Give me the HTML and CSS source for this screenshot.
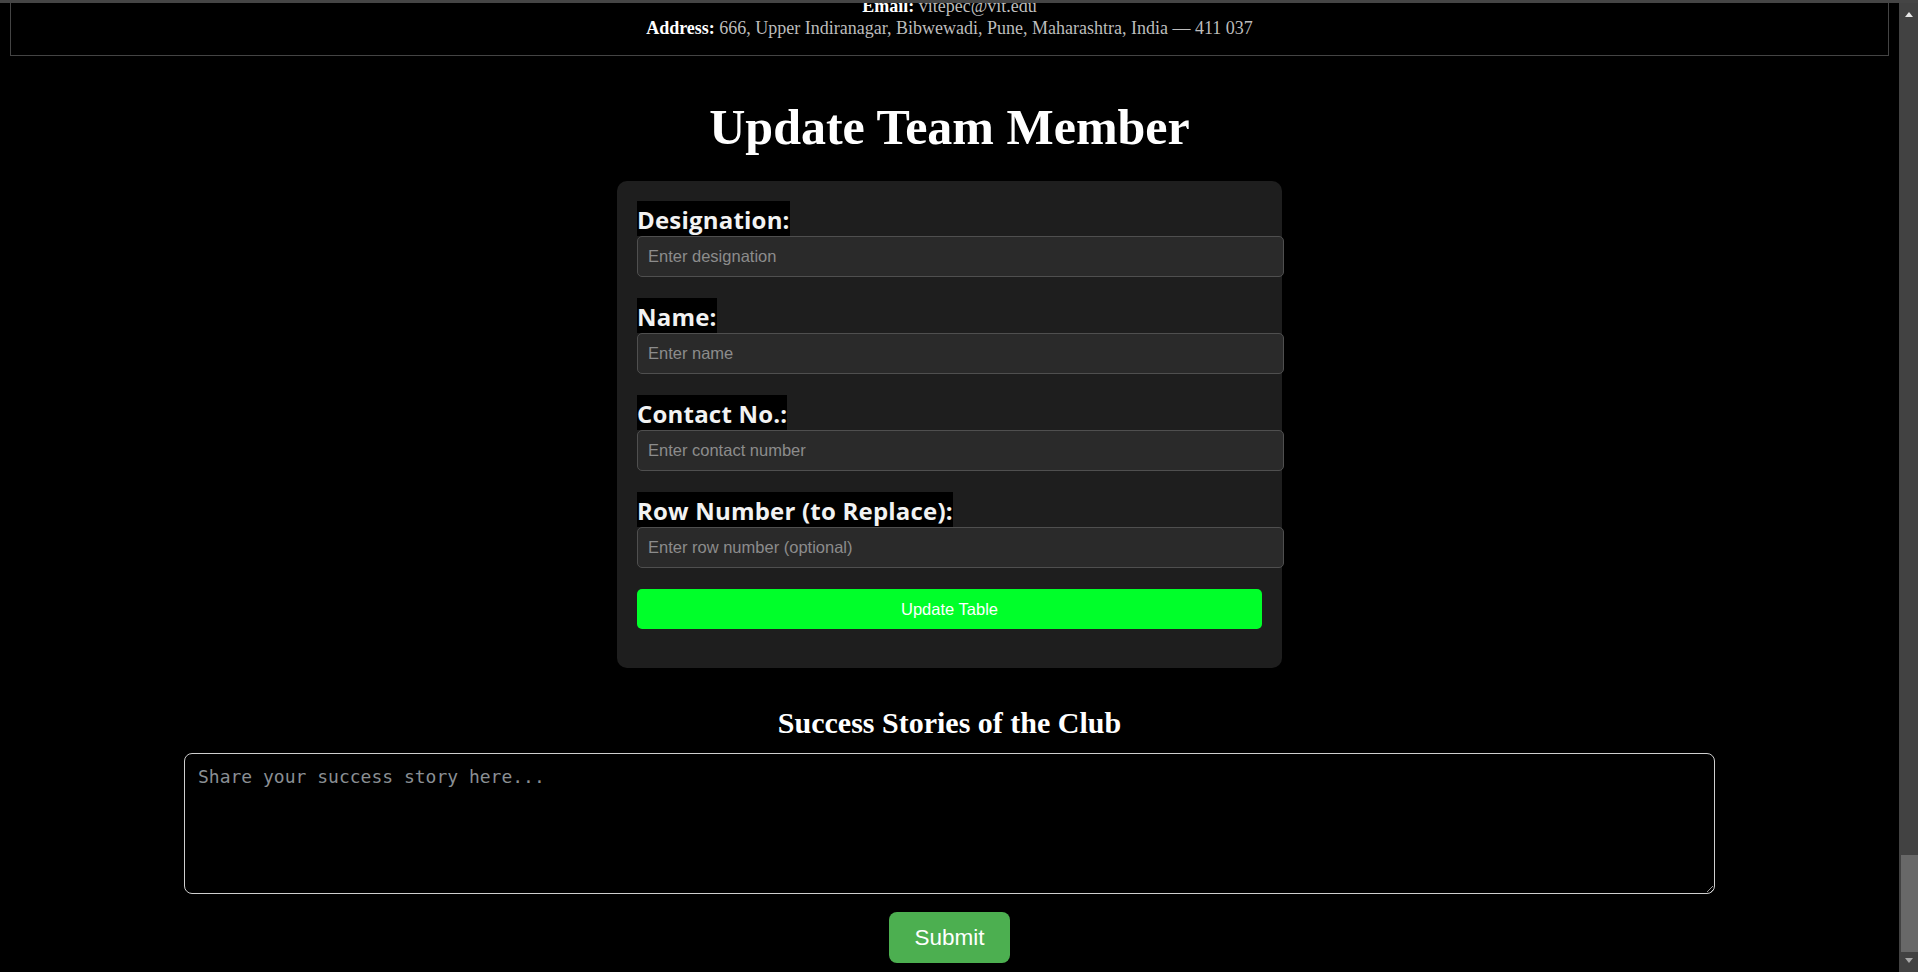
FILE: index.html
```html
<!DOCTYPE html>
<html lang="en">
<head>
<meta charset="utf-8">
<title>Update Team Member</title>
<link rel="stylesheet" href="styles.css">
</head>
<body>
<div class="top-band"></div>
<div class="scrollbar">
  <span class="sb-arrow sb-up"></span>
  <span class="sb-thumb"></span>
  <span class="sb-arrow sb-down"></span>
</div>
<div class="page">
  <div class="contact-box">
    <div class="contact-line"><b>Email:</b> vitepec@vit.edu</div>
    <div class="contact-line"><b>Address:</b> 666, Upper Indiranagar, Bibwewadi, Pune, Maharashtra, India — 411 037</div>
  </div>

  <h1 class="page-title">Update Team Member</h1>

  <form class="card">
    <div class="group">
      <label class="field-label">Designation:</label>
      <input class="field-input" type="text" placeholder="Enter designation">
    </div>
    <div class="group">
      <label class="field-label">Name:</label>
      <input class="field-input" type="text" placeholder="Enter name">
    </div>
    <div class="group">
      <label class="field-label">Contact No.:</label>
      <input class="field-input" type="text" placeholder="Enter contact number">
    </div>
    <div class="group">
      <label class="field-label">Row Number (to Replace):</label>
      <input class="field-input" type="text" placeholder="Enter row number (optional)">
    </div>
    <button class="update-btn" type="button">Update Table</button>
  </form>

  <h2 class="stories-title">Success Stories of the Club</h2>
  <textarea class="story" placeholder="Share your success story here..."></textarea>
  <button class="submit-btn" type="button">Submit</button>
</div>
</body>
</html>
```

FILE: styles.css
```css
html, body {
  margin: 0;
  padding: 0;
  background: #000;
  overflow: hidden;
  height: 100%;
}

body {
  font-family: "Liberation Serif", "Times New Roman", serif;
  color: #fff;
}

.top-band {
  position: fixed;
  top: 0;
  left: 0;
  right: 0;
  height: 3px;
  background: #454545;
  z-index: 5;
}

.scrollbar {
  position: fixed;
  top: 0;
  right: 0;
  width: 19px;
  height: 100%;
  background: #424242;
  z-index: 4;
}

.sb-arrow {
  position: absolute;
  left: 6px;
  width: 0;
  height: 0;
  border-left: 4.5px solid transparent;
  border-right: 4.5px solid transparent;
}

.sb-up {
  top: 12px;
  border-bottom: 5px solid #e6e6e6;
}

.sb-down {
  bottom: 9px;
  border-top: 5px solid #a8a8a8;
}

.sb-thumb {
  position: absolute;
  left: 2px;
  right: 0;
  top: 855px;
  height: 97px;
  background: #686868;
}

.page {
  margin-right: 19px;
}

.contact-box {
  margin: -21px 10px 0;
  border: 1px solid #444;
  padding: 15px 15px 16px;
  text-align: center;
  font-size: 18px;
  line-height: 22px;
  color: #bdbdbd;
}

.contact-box b {
  color: #fff;
}

.page-title {
  margin: 43px 0 26px;
  font-size: 50px;
  line-height: 56px;
  font-weight: bold;
  text-align: center;
  color: #fff;
}

.card {
  width: 625px;
  margin: 0 auto;
  padding: 20px;
  background: #1e1e1e;
  border-radius: 10px;
}

.group {
  display: flex;
  flex-direction: column;
  align-items: flex-start;
  margin-bottom: 21px;
}

.field-label {
  display: inline-block;
  background: #000;
  color: #f2f2f2;
  font-family: "Open Sans", "Noto Sans", sans-serif;
  font-weight: 700;
  font-size: 24px;
  line-height: 32px;
  padding-top: 3px;
  letter-spacing: 0.2px;
}

.field-input {
  display: block;
  width: 100%;
  height: 19px;
  margin: 0;
  padding: 10px;
  border: 1px solid #4f4f4f;
  border-radius: 5px;
  background: #2a2a2a;
  color: #fff;
  font-family: "Liberation Sans", Arial, sans-serif;
  font-size: 16.5px;
  line-height: 19px;
  outline: none;
}

.field-input::placeholder {
  color: #8c8c8c;
}

.update-btn {
  display: block;
  width: 100%;
  height: 40px;
  margin: 0 0 19px;
  border: none;
  border-radius: 5px;
  background: #00ff2a;
  color: #fff;
  font-family: "Liberation Sans", Arial, sans-serif;
  font-size: 16.5px;
}

.stories-title {
  margin: 38px 0 13px;
  font-size: 30px;
  line-height: 34px;
  font-weight: bold;
  text-align: center;
  color: #fff;
}

.story {
  display: block;
  box-sizing: border-box;
  width: 1531px;
  height: 141px;
  margin: 0 auto 18px;
  padding: 12px 13px;
  background: #000;
  color: #fff;
  border: 1px solid #cfcfcf;
  border-radius: 8px;
  font-family: "DejaVu Sans Mono", "Liberation Mono", monospace;
  font-size: 18px;
}

.story::placeholder {
  color: #8a8f94;
}

.submit-btn {
  display: block;
  margin: 0 auto;
  height: 51px;
  padding: 0 25px;
  border: none;
  border-radius: 8px;
  background: #4caf50;
  color: #fff;
  font-family: "Liberation Sans", Arial, sans-serif;
  font-size: 22.5px;
}
```
